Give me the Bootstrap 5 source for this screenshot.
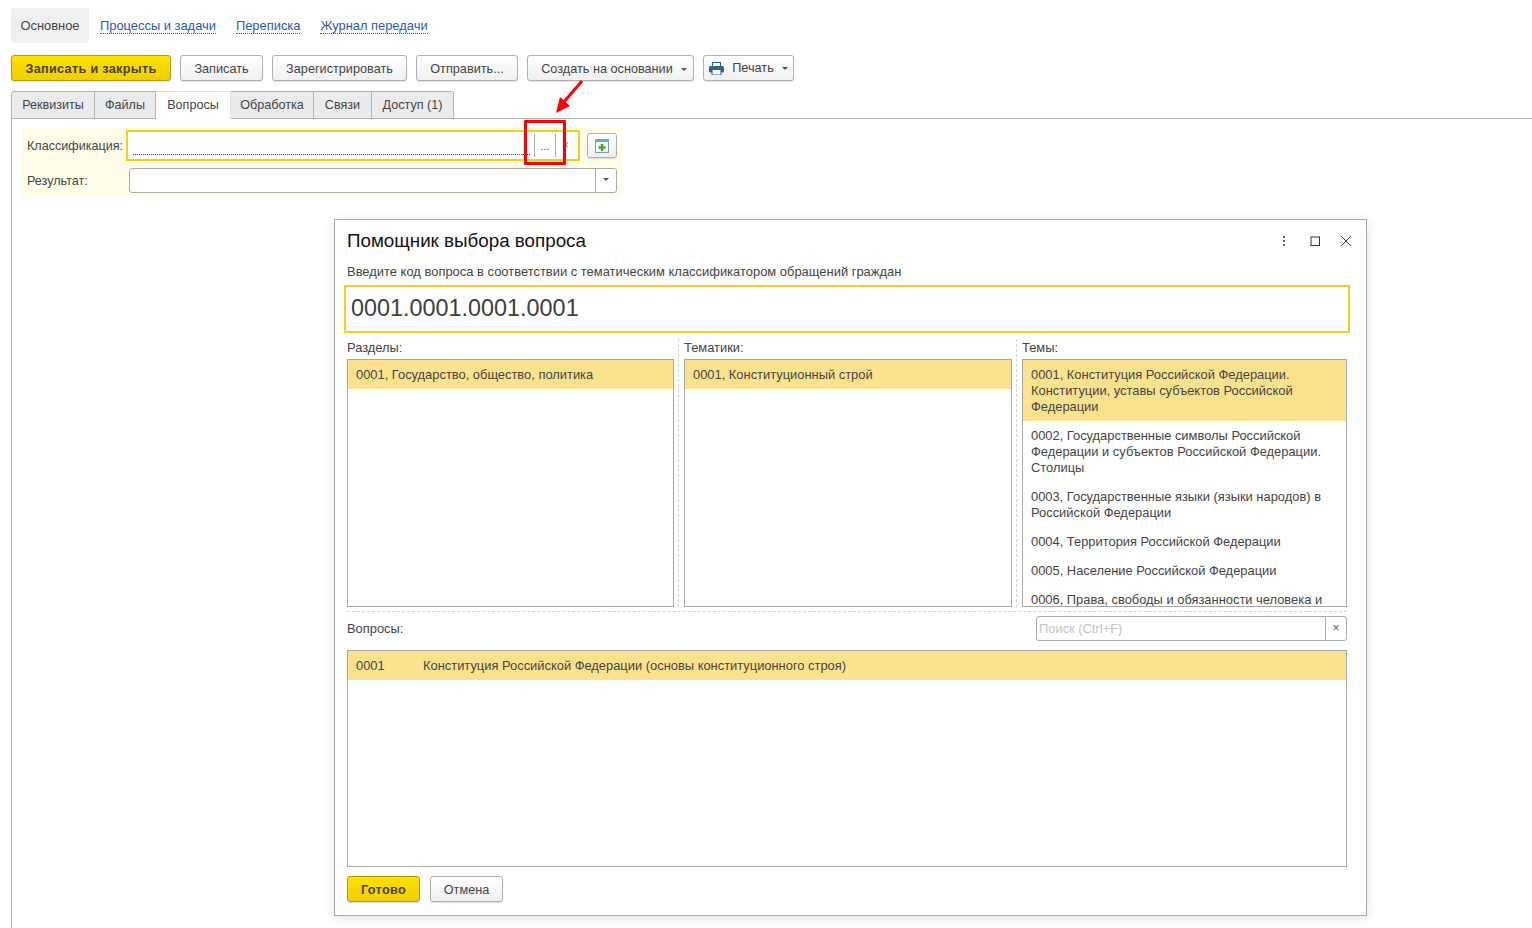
<!DOCTYPE html>
<html lang="ru">
<head>
    <meta charset="UTF-8">
    <meta name="viewport" content="width=device-width, initial-scale=1.0">
    <title>Помощник выбора вопроса</title>
    <link href="https://cdn.jsdelivr.net/npm/bootstrap@5.3.0/dist/css/bootstrap.min.css" rel="stylesheet">
    <style>
        html, body { height: 928px; overflow: hidden; }
        body { font-family: "Liberation Sans", Arial, sans-serif; font-size: 12.6px; line-height: 16px; color: #454545; background: #fff; position: relative; }

        /* верхние разделы */
        .top-nav { height: 34px; margin: 8px 0 0 11px; gap: 0; font-size: 12.9px; }
        .top-nav .nav-link { padding: 0; line-height: 35px; color: #2a5bb5; }
        .top-nav .nav-link span { border-bottom: 1px dotted #2a5bb5; }
        .top-nav .nav-link.current { background: #f0f0f0; color: #454545; width: 78px; text-align: center; border-radius: 3px; margin-right: 11px; }
        .top-nav .nav-link.gap-link { margin-right: 20px; }

        /* командная панель */
        .cmd-bar { margin: 13px 0 0 11px; gap: 9px; height: 26px; }
        .btn-1c { --bs-btn-padding-y: 0; --bs-btn-padding-x: 0; --bs-btn-font-size: 12.7px; --bs-btn-line-height: 26px; --bs-btn-color: #454545; --bs-btn-hover-color: #454545; --bs-btn-border-radius: 3px; height: 26px; background: linear-gradient(#fff, #f0f0f0); border: 1px solid #b0b0b0; box-shadow: 0 1px 1px rgba(0,0,0,.12); white-space: nowrap; }
        .btn-main { background: linear-gradient(#ffe100, #f0cf00); border-color: #b39a12; color: #4a4000; font-weight: bold; letter-spacing: .3px; }
        .btn-main:hover { color: #4a4000; }
        .btn-create { padding-left: 7px; }
        .caret-down { display: inline-block; border: 3px solid transparent; border-top: 3px solid #555; border-bottom: 0; vertical-align: 2px; margin-left: 4px; }

        /* вкладки */
        .tabs-1c { margin: 10px 0 0 11px; height: 28px; border-bottom: 0; flex-wrap: nowrap; }
        .tabs-1c .nav-link { height: 28px; padding: 0; line-height: 26px; text-align: center; margin: 0; color: #454545; background: #ebebeb; border: 1px solid #b4b4b4; border-left-width: 0; border-radius: 0; }
        .tabs-1c .nav-item:first-child .nav-link { border-left-width: 1px; border-top-left-radius: 3px; }
        .tabs-1c .nav-item:last-child .nav-link { border-top-right-radius: 3px; }
        .tabs-1c .nav-link.active { background: #fff; border-bottom-color: #fff; color: #454545; position: relative; z-index: 2; }
        .tab-page { margin-left: 11px; height: 810px; margin-top: -1px; border-top: 1px solid #b4b4b4; border-left: 1px solid #b4b4b4; padding: 8px 0 0 10px; }

        .form-panel { width: 600px; height: 70px; background: #fffde8; padding: 3px 0 0 5px; }
        .field-label { width: 99px; flex: none; }
        .field-row-one { height: 31px; }
        .field-row-two { height: 25px; margin-top: 7px; }
        .field-focus { width: 454px; height: 31px; border: 2px solid #fccb1f; background: #fff; position: relative; padding: 0 3px 0 5px; }
        .field-focus .req-line { flex: 1; margin-bottom: 4px; border-bottom: 1px dotted #d11; height: 1px; align-self: flex-end; }
        .choice-btn { width: 22px; height: 23px; margin: 2px 0 0 4px; border-left: 1px solid #aaa; border-right: 1px solid #aaa; text-align: center; line-height: 24px; font-size: 11px; }
        .clear-btn { width: 19px; text-align: center; line-height: 26px; font-size: 12px; color: #777; }
        .add-btn { width: 30px; height: 25px; margin: 0 0 0 7px; display: flex; align-items: center; justify-content: center; }
        .field-plain { width: 488px; height: 25px; margin-left: 3px; border: 1px solid #aaa; border-radius: 3px; background: #fff; }
        .drop-part { width: 21px; border-left: 1px solid #aaa; text-align: center; line-height: 21px; }
        .drop-part .caret-down { margin: 0; }

        /* аннотация */
        .mark-box { position: absolute; left: 524px; top: 120px; width: 42px; height: 45px; border: 3px solid #f00; border-radius: 1px; z-index: 20; }
        .mark-arrow { position: absolute; left: 550px; top: 78px; z-index: 20; }

        /* окно помощника */
        .helper-win { position: absolute; left: 334px; top: 219px; width: 1033px; height: 697px; background: #fff; border: 1px solid #a8a8a8; box-shadow: 0 2px 10px rgba(0,0,0,.12); padding: 0 19px 0 12px; z-index: 10; font-size: 12.9px; }
        .win-head { height: 42px; }
        .win-title { font-size: 18.8px; line-height: 24px; color: #111; margin: 0; font-weight: normal; }
        .win-tools { gap: 19px; margin-right: -5px; }
        .win-hint { height: 16px; margin-top: 2px; font-size: 12.95px; }
        .code-field { height: 48px; margin: 5px -3px 0 -3px; border: 2px solid #fccb1f; font-size: 23.4px; line-height: 42px; padding-left: 5px; color: #404040; }
        .cols-wrap { height: 268px; margin-top: 6px; }
        .col-one { flex: none; }
        .col-label { height: 20px; line-height: 16px; padding-top: 1px; }
        .pick-list { height: 248px; border: 1px solid #a8a8a8; overflow: hidden; }
        .pick-row { padding: 7px 8px 6px; }
        .pick-row.sel { background: #fde28d; }
        .col-sep { width: 10px; flex: none; position: relative; }
        .col-sep::after { content: ""; position: absolute; left: 4px; top: 0; bottom: 0; border-left: 1px dashed #d4d4d4; }
        .row-sep { border-top: 1px dashed #d4d4d4; margin-top: 4px; height: 0; }
        .questions-bar { height: 25px; margin-top: 4px; }
        .search-box { width: 311px; height: 25px; border: 1px solid #aaa; border-radius: 3px; }
        .search-box .hint-text { flex: 1; color: #c4c4c4; line-height: 23px; padding-left: 2px; }
        .search-x { width: 21px; border-left: 1px solid #aaa; text-align: center; line-height: 22px; color: #666; }
        .answer-list { height: 217px; margin-top: 9px; border: 1px solid #a8a8a8; }
        .answer-row { background: #fde28d; padding: 7px 8px 6px; }
        .answer-code { width: 67px; flex: none; }
        .win-foot { margin-top: 9px; gap: 10px; }
    </style>
</head>
<body>
    <!-- Разделы формы -->
    <nav class="nav top-nav">
        <a class="nav-link current" href="#">Основное</a>
        <a class="nav-link gap-link" href="#"><span>Процессы и задачи</span></a>
        <a class="nav-link gap-link" href="#"><span>Переписка</span></a>
        <a class="nav-link" href="#"><span>Журнал передачи</span></a>
    </nav>

    <!-- Командная панель -->
    <div class="d-flex cmd-bar">
        <button class="btn btn-1c btn-main" style="width:160px">Записать и закрыть</button>
        <button class="btn btn-1c" style="width:83px">Записать</button>
        <button class="btn btn-1c" style="width:135px">Зарегистрировать</button>
        <button class="btn btn-1c" style="width:102px">Отправить...</button>
        <button class="btn btn-1c btn-create" style="width:167px">Создать на основании<i class="caret-down ms-2"></i></button>
        <button class="btn btn-1c d-flex align-items-center justify-content-center" style="width:91px">
            <svg width="15" height="13" viewBox="0 0 15 13" class="me-2">
                <rect x="3.5" y="0.5" width="8" height="5" fill="#fff" stroke="#2f5f8e"/>
                <rect x="0" y="4" width="15" height="6.5" rx="1.5" fill="#2f6597"/>
                <rect x="3" y="7.5" width="9" height="5.5" fill="#fff" stroke="#2f5f8e"/>
            </svg>Печать<i class="caret-down ms-2"></i>
        </button>
    </div>

    <!-- Вкладки -->
    <ul class="nav nav-tabs tabs-1c">
        <li class="nav-item"><a class="nav-link" href="#" style="width:84px">Реквизиты</a></li>
        <li class="nav-item"><a class="nav-link" href="#" style="width:61px">Файлы</a></li>
        <li class="nav-item"><a class="nav-link active" href="#" style="width:75px">Вопросы</a></li>
        <li class="nav-item"><a class="nav-link" href="#" style="width:83px">Обработка</a></li>
        <li class="nav-item"><a class="nav-link" href="#" style="width:58px">Связи</a></li>
        <li class="nav-item"><a class="nav-link" href="#" style="width:82px">Доступ (1)</a></li>
    </ul>
    <div class="tab-page">
        <div class="form-panel">
            <div class="d-flex align-items-center field-row-one">
                <div class="field-label">Классификация:</div>
                <div class="field-focus d-flex">
                    <div class="req-line"></div>
                    <div class="choice-btn">...</div>
                    <div class="clear-btn">×</div>
                </div>
                <button class="btn btn-1c add-btn">
                    <svg width="14" height="14" viewBox="0 0 14 14">
                        <rect x="0.5" y="0.5" width="13" height="13" fill="#f4f9fd" stroke="#7b9cb8"/>
                        <rect x="0" y="0" width="14" height="3" rx="1" fill="#5fa8e4"/>
                        <path d="M7 5v7M3.5 8.5h7" stroke="#45a81e" stroke-width="2.4"/>
                    </svg>
                </button>
            </div>
            <div class="d-flex align-items-center field-row-two">
                <div class="field-label">Результат:</div>
                <div class="field-plain d-flex justify-content-end">
                    <div class="drop-part"><i class="caret-down"></i></div>
                </div>
            </div>
        </div>
    </div>

    <!-- Красная пометка -->
    <svg class="mark-arrow" width="36" height="38" viewBox="0 0 36 38">
        <path d="M32 3 13 25" stroke="#f00" stroke-width="3" fill="none"/>
        <path d="M6 35 10 19 20 28Z" fill="#f00"/>
    </svg>
    <div class="mark-box"></div>

    <!-- Окно помощника -->
    <div class="helper-win">
        <div class="d-flex align-items-center justify-content-between win-head">
            <h5 class="win-title">Помощник выбора вопроса</h5>
            <div class="d-flex align-items-center win-tools">
                <svg width="12" height="12" viewBox="0 0 12 12"><g fill="#666"><rect x="5" y="1" width="2" height="2"/><rect x="5" y="5" width="2" height="2"/><rect x="5" y="9" width="2" height="2"/></g></svg>
                <svg width="12" height="12" viewBox="0 0 12 12"><rect x="2" y="2" width="8.5" height="8.5" fill="none" stroke="#333"/></svg>
                <svg width="12" height="12" viewBox="0 0 12 12"><path d="M1 1 11 11M11 1 1 11" stroke="#444" fill="none"/></svg>
            </div>
        </div>
        <div class="win-hint">Введите код вопроса в соответствии с тематическим классификатором обращений граждан</div>
        <div class="code-field">0001.0001.0001.0001</div>

        <div class="d-flex cols-wrap">
            <div class="col-one" style="width:327px">
                <div class="col-label">Разделы:</div>
                <div class="pick-list">
                    <div class="pick-row sel">0001, Государство, общество, политика</div>
                </div>
            </div>
            <div class="col-sep"></div>
            <div class="col-one" style="width:328px">
                <div class="col-label">Тематики:</div>
                <div class="pick-list">
                    <div class="pick-row sel">0001, Конституционный строй</div>
                </div>
            </div>
            <div class="col-sep"></div>
            <div class="col-one" style="width:325px">
                <div class="col-label">Темы:</div>
                <div class="pick-list">
                    <div class="pick-row sel">0001, Конституция Российской Федерации.<br>Конституции, уставы субъектов Российской<br>Федерации</div>
                    <div class="pick-row">0002, Государственные символы Российской<br>Федерации и субъектов Российской Федерации.<br>Столицы</div>
                    <div class="pick-row">0003, Государственные языки (языки народов) в<br>Российской Федерации</div>
                    <div class="pick-row">0004, Территория Российской Федерации</div>
                    <div class="pick-row">0005, Население Российской Федерации</div>
                    <div class="pick-row">0006, Права, свободы и обязанности человека и</div>
                </div>
            </div>
        </div>
        <div class="row-sep"></div>

        <div class="d-flex align-items-center justify-content-between questions-bar">
            <div>Вопросы:</div>
            <div class="d-flex search-box">
                <div class="hint-text">Поиск (Ctrl+F)</div>
                <div class="search-x">×</div>
            </div>
        </div>

        <div class="answer-list">
            <div class="d-flex answer-row">
                <div class="answer-code">0001</div>
                <div>Конституция Российской Федерации (основы конституционного строя)</div>
            </div>
        </div>

        <div class="d-flex win-foot">
            <button class="btn btn-1c btn-main" style="width:73px">Готово</button>
            <button class="btn btn-1c" style="width:73px">Отмена</button>
        </div>
    </div>

    <script src="https://cdn.jsdelivr.net/npm/bootstrap@5.3.0/dist/js/bootstrap.bundle.min.js"></script>
</body>
</html>
